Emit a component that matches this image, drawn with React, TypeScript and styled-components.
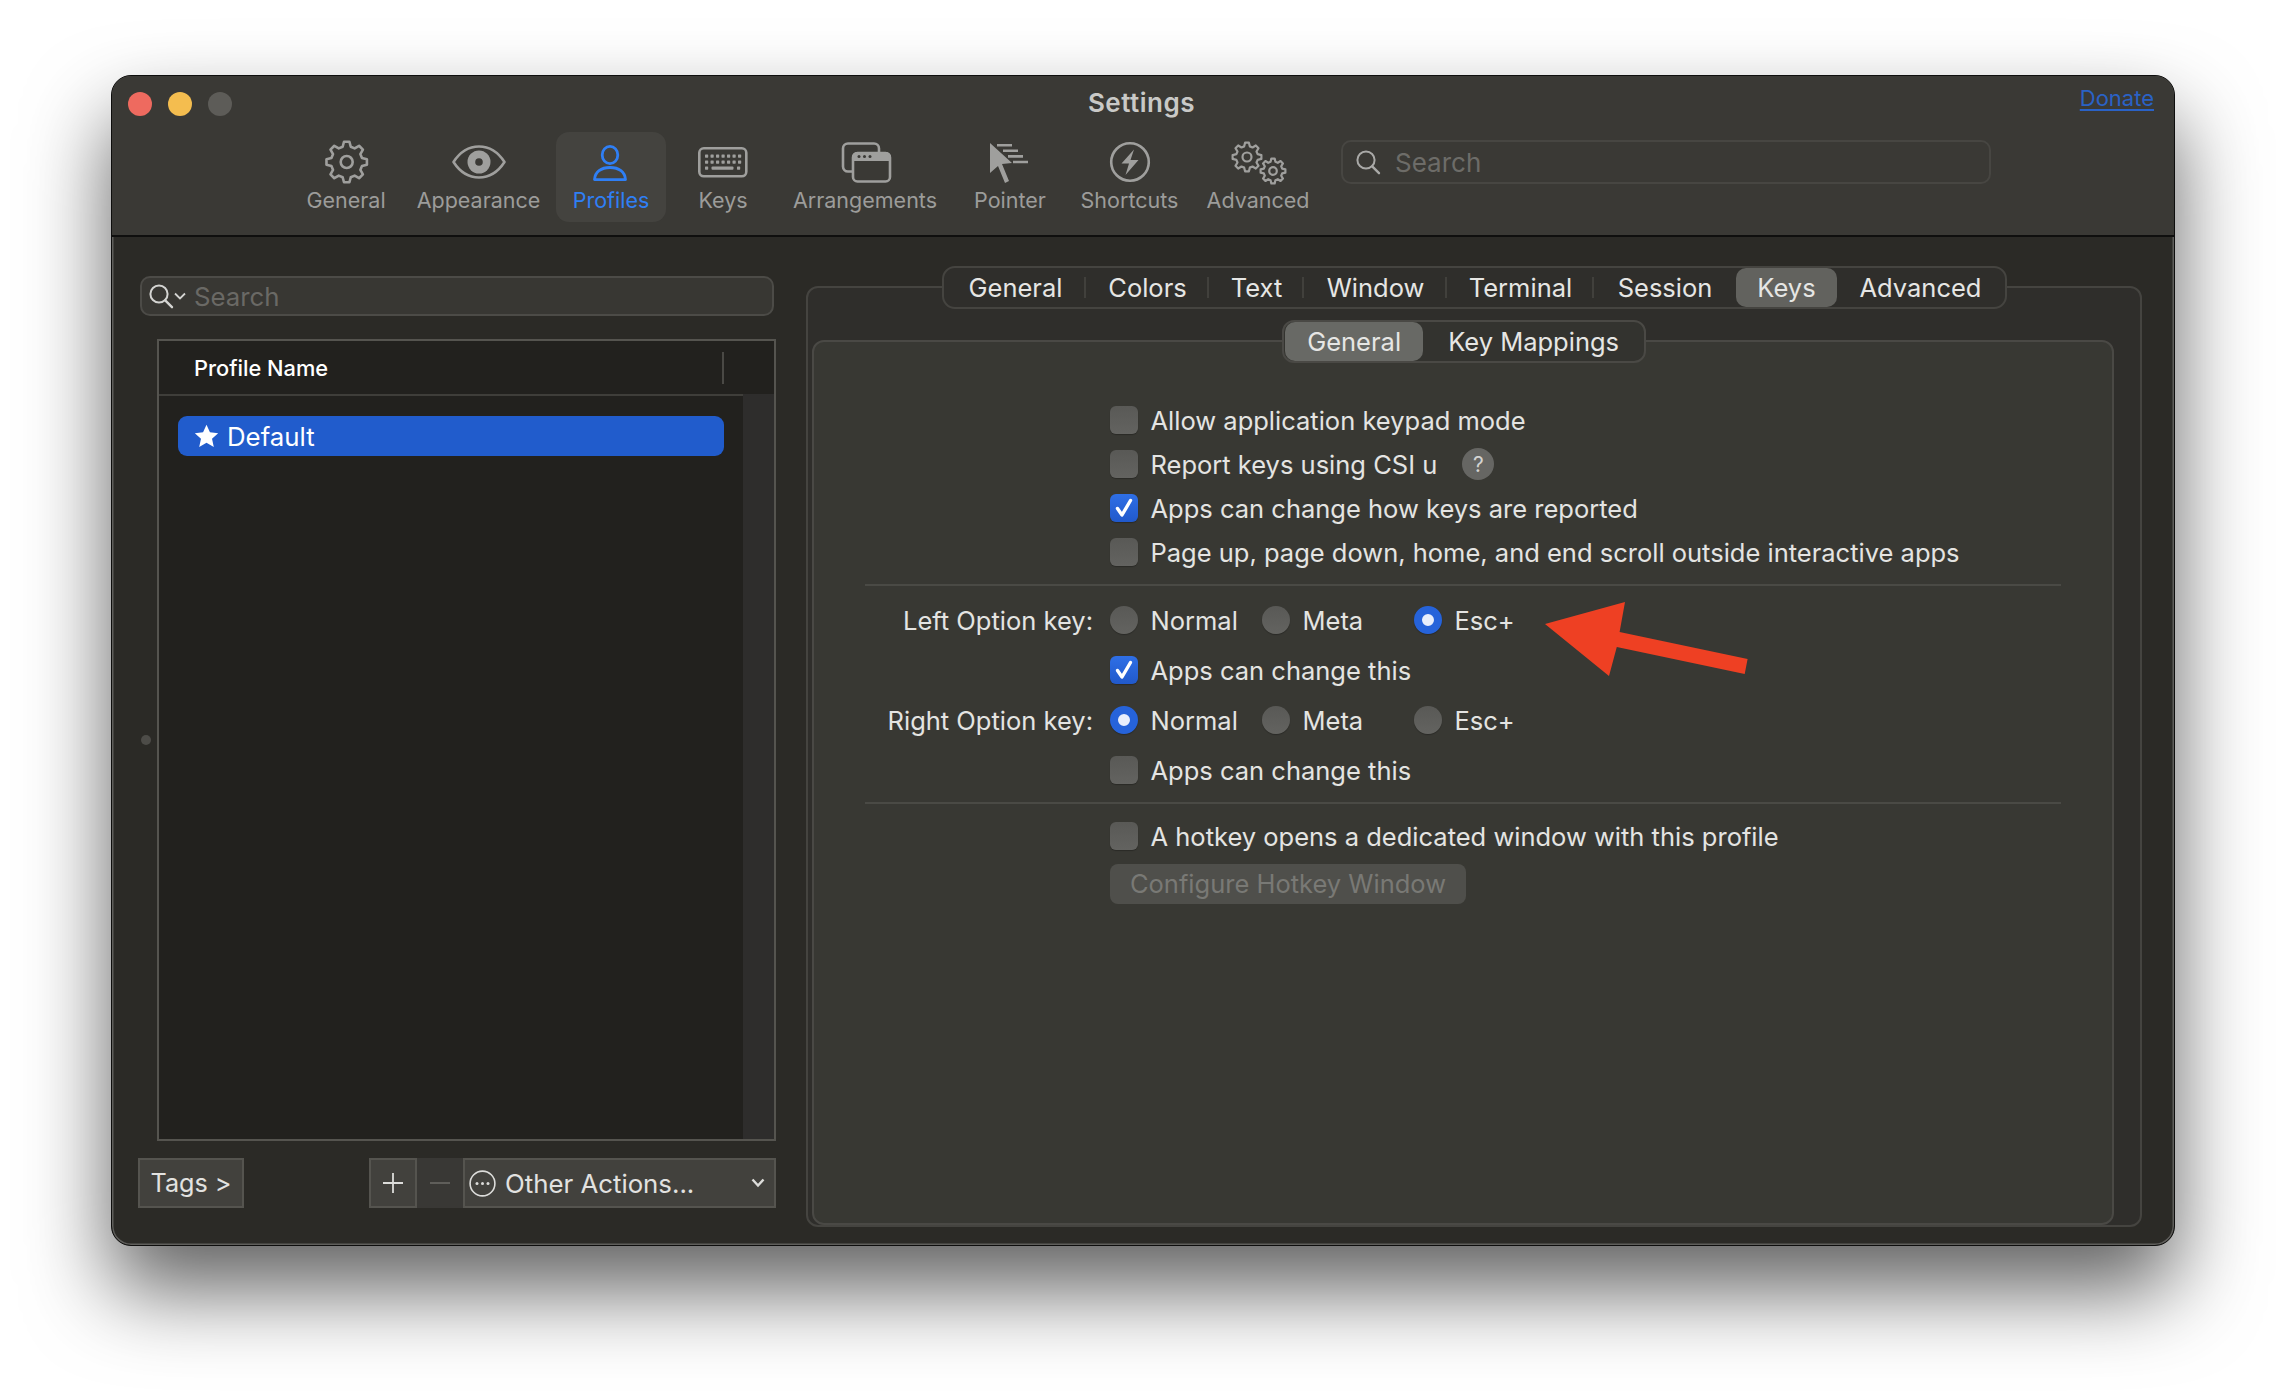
import React from "react";
import styled, { createGlobalStyle } from "styled-components";

const FONT = `Inter, "Liberation Sans", sans-serif`;

const GlobalStyle = createGlobalStyle`
  html, body {
    margin: 0;
    background: #ffffff;
    font-family: ${FONT};
    -webkit-font-smoothing: antialiased;
  }
`;

// outline of a cog with rounded-ish teeth, used by General and Advanced
const gearPath = (cx: number, cy: number, outer: number, inner: number, teeth = 8) => {
  const pts: string[] = [];
  const step = (Math.PI * 2) / teeth;
  for (let i = 0; i < teeth; i++) {
    const a = i * step - Math.PI / 2;
    const p = (r: number, o: number) =>
      `${(cx + Math.cos(a + o * step) * r).toFixed(2)} ${(cy + Math.sin(a + o * step) * r).toFixed(2)}`;
    pts.push(`${i === 0 ? "M" : "L"}${p(outer, -0.17)}`);
    pts.push(`L${p(outer, 0.17)}`);
    pts.push(`L${p(inner, 0.33)}`);
    pts.push(`L${p(inner, 0.67)}`);
  }
  return pts.join(" ") + " Z";
};

const ICON = "#9f9f9d";
const BLUE = "#2f7ff5";
const TITLE_BG = "#3a3935";
const TEXT_SIZE = "25.5px";

const IconSvg = ({ cx, children }: { cx: number; children: React.ReactNode }) => (
  <svg width={70} height={50} viewBox={`${cx - 35} 138 70 50`} fill="none">
    {children}
  </svg>
);

const GeneralIcon = () => (
  <IconSvg cx={346}>
    <path d={gearPath(346.7, 162, 20.4, 15.8)} stroke={ICON} strokeWidth={2.6} strokeLinejoin="round" />
    <circle cx={346.7} cy={162} r={6} stroke={ICON} strokeWidth={2.6} />
  </IconSvg>
);

const AppearanceIcon = () => (
  <IconSvg cx={479}>
    <path
      d="M453.5 162 C460 152 469 146.5 479 146.5 C489 146.5 498 152 504.5 162 C498 172 489 177.5 479 177.5 C469 177.5 460 172 453.5 162 Z"
      stroke={ICON}
      strokeWidth={2.6}
      strokeLinejoin="round"
    />
    <circle cx={479} cy={162} r={11.5} fill={ICON} />
    <circle cx={479} cy={162} r={3.8} fill={TITLE_BG} />
  </IconSvg>
);

const ProfilesIcon = () => (
  <IconSvg cx={611}>
    <ellipse cx={610} cy={155} rx={7.8} ry={8.6} stroke={BLUE} strokeWidth={2.8} />
    <path d="M594.5 179.6 C595 172 601 167.5 610 167.5 C619 167.5 625 172 625.5 179.6 Z" stroke={BLUE} strokeWidth={2.8} strokeLinejoin="round" />
  </IconSvg>
);

const KeysIcon = () => (
  <IconSvg cx={723}>
    <rect x={699.3} y={148.3} width={47} height={28} rx={4.5} stroke={ICON} strokeWidth={2.6} />
    {[0, 1].map((row) =>
      [0, 1, 2, 3, 4, 5, 6].map((col) => (
        <rect key={`${row}-${col}`} x={705 + col * 5.5} y={154.5 + row * 6} width={3.2} height={3.2} rx={0.6} fill={ICON} />
      ))
    )}
    <rect x={705} y={166.5} width={3.2} height={3.2} rx={0.6} fill={ICON} />
    <rect x={711.5} y={166.5} width={22} height={3.2} rx={1} fill={ICON} />
    <rect x={737} y={166.5} width={3.2} height={3.2} rx={0.6} fill={ICON} />
  </IconSvg>
);

const ArrangementsIcon = () => (
  <IconSvg cx={865}>
    <rect x={843} y={143.5} width={36} height={28} rx={5} stroke={ICON} strokeWidth={2.6} />
    <rect x={852} y={152} width={39} height={30} rx={5} fill={TITLE_BG} />
    <path d="M852 161 V157 A5 5 0 0 1 857 152 H886 A5 5 0 0 1 891 157 V161 Z" fill={ICON} />
    <rect x={853} y={153} width={37} height={28.5} rx={4.5} stroke={ICON} strokeWidth={2.6} />
    <circle cx={859} cy={156.5} r={1.5} fill={TITLE_BG} />
    <circle cx={864.5} cy={156.5} r={1.5} fill={TITLE_BG} />
    <circle cx={870} cy={156.5} r={1.5} fill={TITLE_BG} />
  </IconSvg>
);

const PointerIcon = () => (
  <IconSvg cx={1010}>
    <path d="M990 143 L990 173 L998 166 L1005 183 L1009 181 L1002 164 L1012 163 Z" fill={ICON} />
    <path d="M997 145.2 H1012 M1003 150.8 H1018 M1008 156.4 H1023 M1013 162 H1028" stroke={ICON} strokeWidth={2.6} />
  </IconSvg>
);

const ShortcutsIcon = () => (
  <IconSvg cx={1130}>
    <circle cx={1130} cy={162} r={18.8} stroke={ICON} strokeWidth={2.6} />
    <path d="M1134 149.5 L1121.5 163.5 L1129 163.5 L1125.5 175 L1138.5 160 L1130.5 160 Z" fill={ICON} />
  </IconSvg>
);

const AdvancedIcon = () => (
  <IconSvg cx={1258}>
    <path d={gearPath(1247, 157, 14.5, 11)} stroke={ICON} strokeWidth={2.2} strokeLinejoin="round" />
    <circle cx={1247} cy={157} r={4.5} stroke={ICON} strokeWidth={2.2} />
    <path d={gearPath(1273, 171, 12.5, 9.5)} stroke={ICON} strokeWidth={2.2} strokeLinejoin="round" />
    <circle cx={1273} cy={171} r={3.8} stroke={ICON} strokeWidth={2.2} />
  </IconSvg>
);

const toolbarItems = [
  { label: "General", width: 110, icon: <GeneralIcon /> },
  { label: "Appearance", width: 155, icon: <AppearanceIcon /> },
  { label: "Profiles", width: 110, icon: <ProfilesIcon />, active: true },
  { label: "Keys", width: 114, icon: <KeysIcon /> },
  { label: "Arrangements", width: 170, icon: <ArrangementsIcon /> },
  { label: "Pointer", width: 120, icon: <PointerIcon /> },
  { label: "Shortcuts", width: 119, icon: <ShortcutsIcon /> },
  { label: "Advanced", width: 138, icon: <AdvancedIcon /> },
];

const profileTabs = [
  { label: "General", width: 141 },
  { label: "Colors", width: 123 },
  { label: "Text", width: 95 },
  { label: "Window", width: 143 },
  { label: "Terminal", width: 147 },
  { label: "Session", width: 142 },
  { label: "Keys", width: 101, active: true },
  { label: "Advanced", width: 167 },
];

const SearchGlass = ({ size = 26, color = "#a9a9a7" }: { size?: number; color?: string }) => (
  <svg width={size} height={size} viewBox="0 0 26 26" fill="none">
    <circle cx={11} cy={11} r={8.6} stroke={color} strokeWidth={2} />
    <path d="M17.2 17.4 L24 24.2" stroke={color} strokeWidth={2.4} strokeLinecap="round" />
  </svg>
);

const CheckMark = () => (
  <svg width={28} height={28} viewBox="0 0 28 28" fill="none">
    <path d="M7.5 14.5 L12 21 L20.5 6.5" stroke="#ffffff" strokeWidth={3.4} strokeLinejoin="round" strokeLinecap="round" />
  </svg>
);

const Check = ({ on, label }: { on?: boolean; label: string }) => (
  <CheckLabel>
    <CheckBox $on={on}>{on && <CheckMark />}</CheckBox>
    {label}
  </CheckLabel>
);

const RadioGroup = ({ selected }: { selected: string }) => (
  <RadioRow>
    {["Normal", "Meta", "Esc+"].map((option) => (
      <RadioOption key={option}>
        <RadioDot $on={option === selected} />
        {option}
      </RadioOption>
    ))}
  </RadioRow>
);

export default function App() {
  return (
    <Page>
      <GlobalStyle />
      <Window>
        <TitleBar>
          <TitleRow>
            <Lights>
              <Light $color="#ee6a5f" />
              <Light $color="#f4bd4f" />
              <Light $color="#5d5c58" />
            </Lights>
            <Title>Settings</Title>
            <Donate>Donate</Donate>
          </TitleRow>
          <Toolbar>
            {toolbarItems.map((item) => (
              <ToolItem key={item.label} $width={item.width} $active={item.active}>
                <ToolIcon>{item.icon}</ToolIcon>
                {item.label}
              </ToolItem>
            ))}
            <ToolSearch>
              <SearchGlass />
              Search
            </ToolSearch>
          </Toolbar>
        </TitleBar>

        <Body>
          <SplitDot />
          <Sidebar>
            <SideSearch>
              <SearchGlass color="#d4d4d2" />
              <svg width={12} height={8} viewBox="0 0 12 8" fill="none">
                <path d="M1 1.5 L6 6.5 L11 1.5" stroke="#d4d4d2" strokeWidth={1.8} />
              </svg>
              <SideSearchText>Search</SideSearchText>
            </SideSearch>

            <ProfileTable>
              <TableHead>
                <HeadCell>Profile Name</HeadCell>
              </TableHead>
              <TableBody>
                <RowList>
                  <ProfileRow>
                    <svg width={25} height={24} viewBox="0 0 24 23">
                      <path d="M12 0.8 L15.3 8 L23.2 8.9 L17.3 14.2 L19 22 L12 18 L5 22 L6.7 14.2 L0.8 8.9 L8.7 8 Z" fill="#fff" strokeLinejoin="round" />
                    </svg>
                    Default
                  </ProfileRow>
                </RowList>
                <ScrollTrack />
              </TableBody>
            </ProfileTable>

            <ActionRow>
              <TagsButton>Tags &gt;</TagsButton>
              <ActionGroup>
                <SquareButton>
                  <svg width={22} height={22} viewBox="0 0 22 22" fill="none">
                    <path d="M11 1 V21 M1 11 H21" stroke="#dcdcda" strokeWidth={1.8} />
                  </svg>
                </SquareButton>
                <SquareButton $disabled>
                  <svg width={22} height={22} viewBox="0 0 22 22" fill="none">
                    <path d="M1 11 H21" stroke="#5f5e5a" strokeWidth={2} />
                  </svg>
                </SquareButton>
                <ActionsMenu>
                  <svg width={27} height={27} viewBox="0 0 27 27" fill="none">
                    <circle cx={13.5} cy={13.5} r={12.4} stroke="#dcdcda" strokeWidth={1.6} />
                    <circle cx={8} cy={13.5} r={1.5} fill="#dcdcda" />
                    <circle cx={13.5} cy={13.5} r={1.5} fill="#dcdcda" />
                    <circle cx={19} cy={13.5} r={1.5} fill="#dcdcda" />
                  </svg>
                  <MenuText>Other Actions...</MenuText>
                  <svg width={14} height={10} viewBox="0 0 14 10" fill="none">
                    <path d="M1.5 1.5 L7 7.5 L12.5 1.5" stroke="#dcdcda" strokeWidth={2.4} />
                  </svg>
                </ActionsMenu>
              </ActionGroup>
            </ActionRow>
          </Sidebar>

          <TabBox>
            <TabBar>
              {profileTabs.map((tab, i) => (
                <TabItem key={tab.label} $width={tab.width} $active={tab.active} $divider={i < 5}>
                  {tab.label}
                </TabItem>
              ))}
            </TabBar>

            <InnerBox>
              <SubTabs>
                <SubTab $active $width={139}>General</SubTab>
                <SubTab $width={222}>Key Mappings</SubTab>
              </SubTabs>

              <Form>
                <PlainRow><Check label="Allow application keypad mode" /></PlainRow>
                <PlainRow>
                  <Check label="Report keys using CSI u" />
                  <HelpDot>?</HelpDot>
                </PlainRow>
                <PlainRow><Check on label="Apps can change how keys are reported" /></PlainRow>
                <PlainRow><Check label="Page up, page down, home, and end scroll outside interactive apps" /></PlainRow>

                <Divider $top={10} $bottom={9} />

                <OptionRow>
                  <RowLabel>Left Option key:</RowLabel>
                  <RadioGroup selected="Esc+" />
                </OptionRow>
                <OptionRow>
                  <RowLabel />
                  <Check on label="Apps can change this" />
                </OptionRow>
                <OptionRow>
                  <RowLabel>Right Option key:</RowLabel>
                  <RadioGroup selected="Normal" />
                </OptionRow>
                <OptionRow>
                  <RowLabel />
                  <Check label="Apps can change this" />
                </OptionRow>

                <Divider $top={7} $bottom={10} />

                <PlainRow><Check label="A hotkey opens a dedicated window with this profile" /></PlainRow>
                <ConfigureButton>Configure Hotkey Window</ConfigureButton>
              </Form>

              <RedArrow width={210} height={80} viewBox="0 0 210 80">
                <path d="M0 22 L80 0 L74.6 30 L202.6 57 L199.7 72 L71.8 45 L64 74 Z" fill="#ee4023" />
              </RedArrow>
            </InnerBox>
          </TabBox>
        </Body>
      </Window>
    </Page>
  );
}

const Page = styled.div`
  width: 2286px;
  height: 1394px;
  padding: 75px 0 0 111px;
  box-sizing: border-box;
  overflow: hidden;
  background: #ffffff;
`;

const Window = styled.div`
  width: 2064px;
  height: 1171px;
  box-sizing: border-box;
  display: flex;
  flex-direction: column;
  border-radius: 20px;
  overflow: hidden;
  background: #2b2a26;
  border: 1px solid #0e0e0d;
  box-shadow: inset 0 0 0 1.5px #5f5e5b, 0 44px 84px rgba(0, 0, 0, 0.62);
`;

const TitleBar = styled.header`
  height: 161px;
  flex: none;
  box-sizing: border-box;
  background: ${TITLE_BG};
  border-bottom: 2px solid #0f0f0e;
`;

const TitleRow = styled.div`
  height: 56px;
  display: grid;
  grid-template-columns: 1fr auto 1fr;
  align-items: center;
  padding: 0 20px 0 16px;
`;

const Lights = styled.div`
  display: flex;
  gap: 16px;
`;

const Light = styled.span<{ $color: string }>`
  width: 24px;
  height: 24px;
  border-radius: 50%;
  background: ${(p) => p.$color};
`;

const Title = styled.div`
  font-size: 26px;
  font-weight: 600;
  letter-spacing: 0.5px;
  color: #c9c9c7;
  margin: 0 0 3px 1px;
`;

const Donate = styled.a`
  justify-self: end;
  align-self: start;
  margin-top: 9px;
  font-size: 22px;
  color: #2a62c6;
  text-decoration: underline;
  text-underline-offset: 3px;
`;

const Toolbar = styled.nav`
  display: flex;
  align-items: flex-start;
  padding-left: 179px;
`;

const ToolItem = styled.div<{ $width: number; $active?: boolean }>`
  width: ${(p) => p.$width}px;
  height: 90px;
  flex: none;
  display: flex;
  flex-direction: column;
  align-items: center;
  font-size: 21.5px;
  white-space: nowrap;
  border-radius: 13px;
  color: ${(p) => (p.$active ? BLUE : "#9c9c9a")};
  background: ${(p) => (p.$active ? "#44433f" : "transparent")};
`;

const ToolIcon = styled.div`
  height: 49px;
  margin: 6px 0 0;
  display: flex;
`;

const ToolSearch = styled.div`
  width: 650px;
  height: 44px;
  margin: 8px 0 0 14px;
  box-sizing: border-box;
  display: flex;
  align-items: center;
  gap: 14px;
  padding-left: 12px;
  font-size: 26px;
  color: #6d6c68;
  border: 2px solid #474642;
  border-radius: 10px;
`;

const Body = styled.main`
  position: relative;
  flex: 1;
  display: flex;
  align-items: flex-start;
`;

const SplitDot = styled.span`
  position: absolute;
  left: 29px;
  top: 498px;
  width: 10px;
  height: 10px;
  border-radius: 50%;
  background: #4d4c48;
`;

const Sidebar = styled.aside`
  width: 638px;
  margin: 39px 0 0 26px;
  flex: none;
  display: flex;
  flex-direction: column;
`;

const SideSearch = styled.div`
  width: 634px;
  height: 40px;
  margin-left: 2px;
  box-sizing: border-box;
  display: flex;
  align-items: center;
  padding-left: 6px;
  background: #383733;
  border: 2px solid #4c4b47;
  border-radius: 10px;
`;

const SideSearchText = styled.span`
  margin-left: 8px;
  font-size: 25.8px;
  color: #6a6965;
`;

const ProfileTable = styled.div`
  width: 619px;
  height: 802px;
  margin: 23px 0 0 19px;
  box-sizing: border-box;
  display: flex;
  flex-direction: column;
  background: #22211e;
  border: 2px solid #55544f;
`;

const TableHead = styled.div`
  height: 55px;
  flex: none;
  width: 586px;
  box-sizing: border-box;
  display: flex;
  align-items: center;
  border-bottom: 2px solid #3f3e3a;
`;

const HeadCell = styled.div`
  width: 565px;
  height: 32px;
  box-sizing: border-box;
  display: flex;
  align-items: center;
  padding-left: 35px;
  font-size: 21.8px;
  font-weight: 500;
  color: #ffffff;
  border-right: 2px solid #4a4945;
`;

const TableBody = styled.div`
  flex: 1;
  display: flex;
`;

const RowList = styled.div`
  flex: 1;
  padding: 20px 19px 0 19px;
`;

const ScrollTrack = styled.div`
  width: 31px;
  background: #2e2d2c;
  margin-top: -2px;
`;

const ProfileRow = styled.div`
  height: 40px;
  display: flex;
  align-items: center;
  gap: 8px;
  padding-left: 16px;
  font-size: 25.8px;
  color: #ffffff;
  background: #215ccc;
  border-radius: 9px;
`;

const ActionRow = styled.div`
  height: 50px;
  margin-top: 17px;
  display: flex;
  justify-content: space-between;
`;

const TagsButton = styled.div`
  width: 106px;
  box-sizing: border-box;
  display: flex;
  align-items: center;
  justify-content: center;
  font-size: 25.2px;
  color: #e2e2e0;
  background: #42413d;
  border: 2px solid #55544f;
`;

const ActionGroup = styled.div`
  display: flex;
`;

const SquareButton = styled.div<{ $disabled?: boolean }>`
  width: ${(p) => (p.$disabled ? 46 : 48)}px;
  box-sizing: border-box;
  display: flex;
  align-items: center;
  justify-content: center;
  background: ${(p) => (p.$disabled ? "#393835" : "#42413d")};
  border: 2px solid ${(p) => (p.$disabled ? "#393835" : "#55544f")};
  border-right-width: ${(p) => (p.$disabled ? 0 : 2)}px;
  border-left-width: ${(p) => (p.$disabled ? 0 : 2)}px;
`;

const ActionsMenu = styled.div`
  width: 313px;
  box-sizing: border-box;
  display: flex;
  align-items: center;
  padding: 0 9px 0 4px;
  font-size: 25.8px;
  color: #e2e2e0;
  background: #42413d;
  border: 2px solid #55544f;
`;

const MenuText = styled.span`
  flex: 1;
  margin-left: 9px;
`;

const TabBox = styled.section`
  width: 1336px;
  height: 941px;
  margin: 49px 0 0 30px;
  box-sizing: border-box;
  flex: none;
  display: flex;
  flex-direction: column;
  background: #2f2e2b;
  border: 2px solid #454440;
  border-radius: 12px;
`;

const TabBar = styled.div`
  height: 43px;
  margin: -22px 0 0 134px;
  flex: none;
  align-self: flex-start;
  box-sizing: border-box;
  display: flex;
  align-items: center;
  padding: 0 1px;
  background: #2f2e2b;
  border: 2px solid #454440;
  border-radius: 13px;
`;

const TabItem = styled.div<{ $width: number; $active?: boolean; $divider?: boolean }>`
  position: relative;
  width: ${(p) => p.$width}px;
  height: 39px;
  display: flex;
  align-items: center;
  justify-content: center;
  font-size: ${TEXT_SIZE};
  color: #e6e6e4;
  border-radius: 10px;
  background: ${(p) => (p.$active ? "#62625e" : "transparent")};
  ${(p) =>
    p.$divider &&
    `&::after {
      content: "";
      position: absolute;
      right: 0;
      top: 9px;
      height: 21px;
      width: 2px;
      background: #41403c;
    }`}
`;

const InnerBox = styled.div`
  position: relative;
  width: 1302px;
  margin: 31px 0 0 4px;
  flex: 1;
  box-sizing: border-box;
  background: #383833;
  border: 2px solid #4a4945;
  border-radius: 12px;
`;

const SubTabs = styled.div`
  width: 364px;
  height: 43px;
  margin: -22px 0 0 468px;
  box-sizing: border-box;
  display: flex;
  align-items: center;
  padding-left: 1px;
  background: #33332f;
  border: 2px solid #4a4945;
  border-radius: 12px;
`;

const SubTab = styled.div<{ $width: number; $active?: boolean }>`
  width: ${(p) => p.$width}px;
  height: 39px;
  display: flex;
  align-items: center;
  justify-content: center;
  font-size: ${TEXT_SIZE};
  color: #e6e6e4;
  border-radius: 10px;
  background: ${(p) => (p.$active ? "#686965" : "transparent")};
`;

const Form = styled.div`
  padding-top: 35px;
  display: flex;
  flex-direction: column;
`;

const PlainRow = styled.div`
  height: 44px;
  margin-left: 296px;
  display: flex;
  align-items: center;
`;

const OptionRow = styled.div`
  height: 50px;
  display: flex;
  align-items: center;
`;

const RowLabel = styled.div`
  width: 279px;
  flex: none;
  margin-right: 17px;
  text-align: right;
  font-size: ${TEXT_SIZE};
  color: #e4e4e2;
`;

const CheckLabel = styled.div`
  display: flex;
  align-items: center;
  gap: 12.5px;
  font-size: ${TEXT_SIZE};
  color: #e4e4e2;
  white-space: nowrap;
`;

const CheckBox = styled.span<{ $on?: boolean }>`
  width: 28px;
  height: 28px;
  flex: none;
  border-radius: 6px;
  background: ${(p) => (p.$on ? "linear-gradient(#2f6fe6, #2159cb)" : "linear-gradient(#595956, #636360)")};
  box-shadow: 0 1px 1px rgba(0, 0, 0, 0.25);
`;

const RadioRow = styled.div`
  display: flex;
`;

const RadioOption = styled.div`
  width: 152px;
  display: flex;
  align-items: center;
  gap: 12.5px;
  font-size: ${TEXT_SIZE};
  color: #e4e4e2;
`;

const RadioDot = styled.span<{ $on?: boolean }>`
  width: 28px;
  height: 28px;
  flex: none;
  box-sizing: border-box;
  border-radius: 50%;
  background: ${(p) => (p.$on ? "#e8eefc" : "linear-gradient(#595956, #636360)")};
  border: ${(p) => (p.$on ? "8px solid #2663da" : "none")};
  box-shadow: 0 1px 1px rgba(0, 0, 0, 0.25);
`;

const HelpDot = styled.span`
  width: 32px;
  height: 32px;
  margin-left: 25px;
  display: flex;
  align-items: center;
  justify-content: center;
  border-radius: 50%;
  font-size: 21px;
  color: #d4d4d2;
  background: #666663;
`;

const Divider = styled.div<{ $top: number; $bottom: number }>`
  width: 1196px;
  height: 2px;
  margin: ${(p) => p.$top}px 0 ${(p) => p.$bottom}px 51px;
  background: #4a4a45;
`;

const ConfigureButton = styled.div`
  width: 356px;
  height: 40px;
  margin: 6px 0 0 296px;
  padding-bottom: 2px;
  box-sizing: border-box;
  display: flex;
  align-items: center;
  justify-content: center;
  font-size: ${TEXT_SIZE};
  color: #797975;
  background: #4f4f4b;
  border-radius: 8px;
`;

const RedArrow = styled.svg`
  position: absolute;
  left: 731px;
  top: 260px;
`;
